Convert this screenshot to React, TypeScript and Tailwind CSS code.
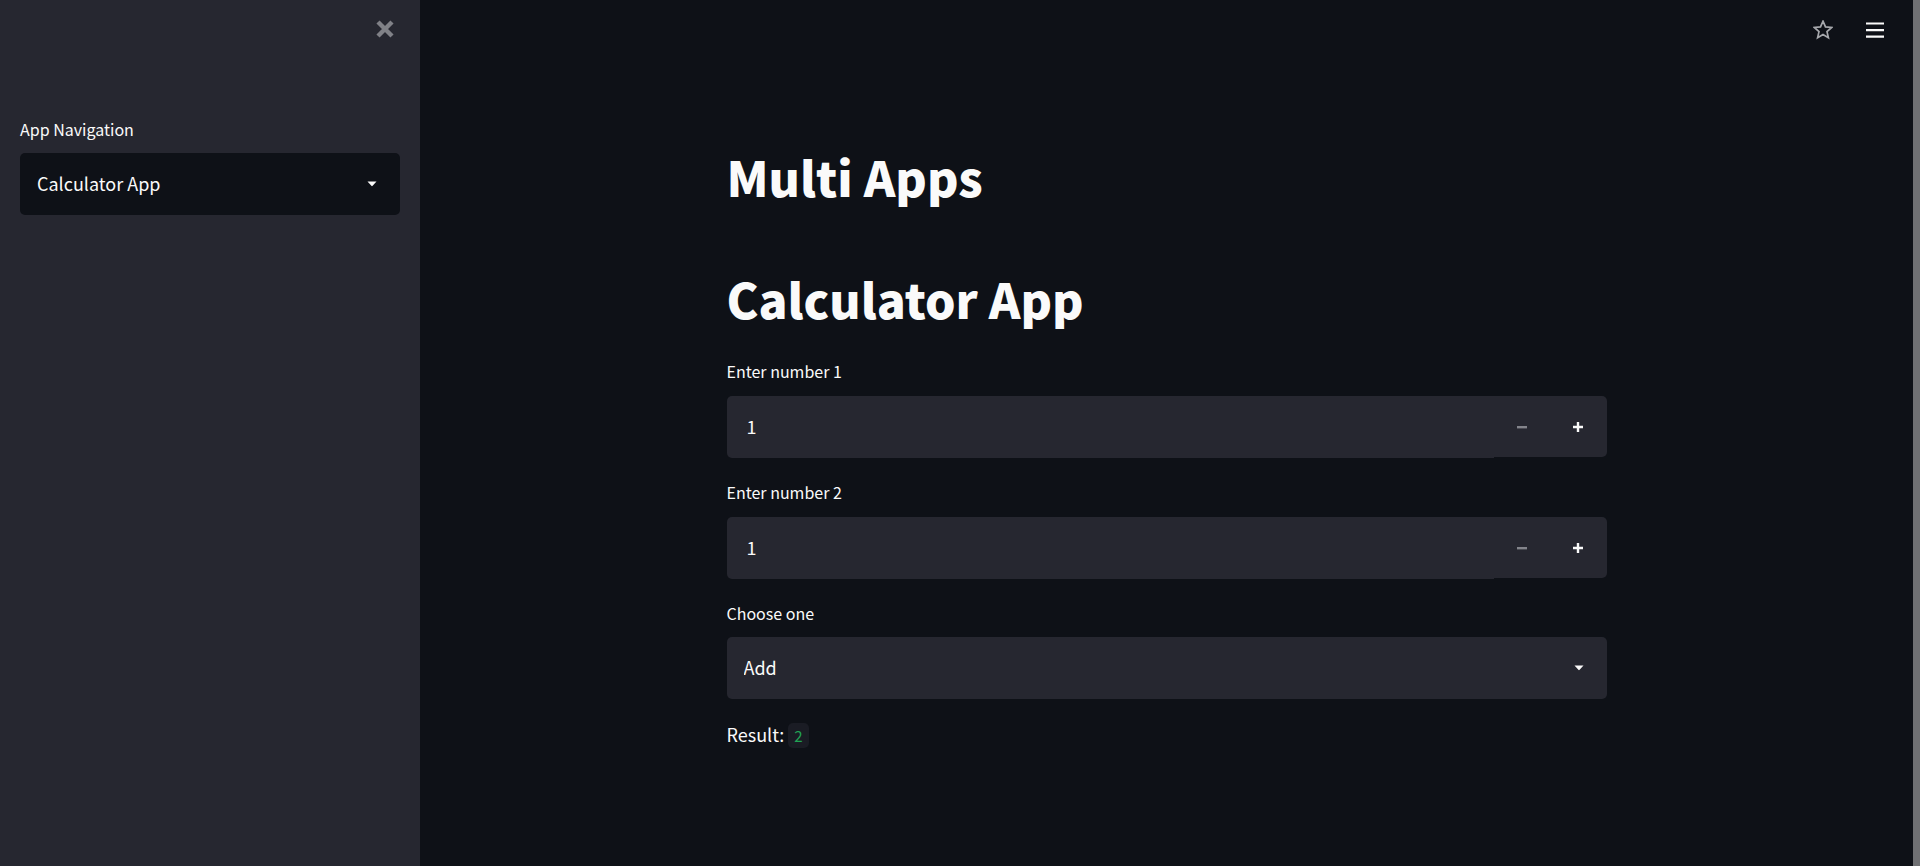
import { useId, useState } from "react";

function Caret() {
  return (
    <svg
      aria-hidden="true"
      viewBox="0 0 10 6"
      className="pointer-events-none absolute right-[23px] top-7 h-[6px] w-[10px]"
    >
      <path d="M0.5 0.5h9L5.6 4.8a0.8 0.8 0 0 1-1.2 0z" fill="#fafafa" />
    </svg>
  );
}

type SelectFieldProps = {
  label: string;
  options: string[];
  value: string;
  onChange: (value: string) => void;
  tone: "dark" | "light";
};

function SelectField({ label, options, value, onChange, tone }: SelectFieldProps) {
  const id = useId();
  const background = tone === "dark" ? "bg-[#0e1117]" : "bg-[#262730]";
  return (
    <div>
      <label htmlFor={id} className="mb-[10px] block text-base leading-7">
        {label}
      </label>
      <div className="relative">
        <select
          id={id}
          value={value}
          onChange={(event) => onChange(event.target.value)}
          className={`block h-[62px] w-full appearance-none rounded-[5px] pb-[2px] pl-[17px] pr-12 text-lg outline-none ${background}`}
        >
          {options.map((option) => (
            <option key={option}>{option}</option>
          ))}
        </select>
        <Caret />
      </div>
    </div>
  );
}

type NumberFieldProps = {
  label: string;
  value: number;
  onChange: (value: number) => void;
};

function NumberField({ label, value, onChange }: NumberFieldProps) {
  const id = useId();
  return (
    <div>
      <label htmlFor={id} className="mb-[11px] block text-base leading-7">
        {label}
      </label>
      <div className="flex items-start">
        <input
          id={id}
          type="text"
          inputMode="numeric"
          value={value}
          onChange={(event) => onChange(Number(event.target.value) || 0)}
          className="h-[62px] min-w-0 flex-1 rounded-l-[5px] bg-[#262730] px-5 pb-[2px] text-lg outline-none"
        />
        <div className="flex h-[61px] rounded-r-[5px] bg-[#262730] pr-px">
          <button
            type="button"
            aria-label={`Decrease ${label}`}
            disabled={value <= 1}
            onClick={() => onChange(value - 1)}
            className="flex w-14 items-center justify-center disabled:text-[#83848b]"
          >
            <svg aria-hidden="true" viewBox="0 0 10 10" className="size-[10px]">
              <path d="M0 4h10v2.4H0z" fill="currentColor" />
            </svg>
          </button>
          <button
            type="button"
            aria-label={`Increase ${label}`}
            onClick={() => onChange(value + 1)}
            className="flex w-14 items-center justify-center"
          >
            <svg aria-hidden="true" viewBox="0 0 10 10" className="size-[10px]">
              <path d="M0 3.8h3.8V0h2.4v3.8H10v2.4H6.2V10H3.8V6.2H0z" fill="currentColor" />
            </svg>
          </button>
        </div>
      </div>
    </div>
  );
}

export default function App() {
  const [page, setPage] = useState("Calculator App");
  const [first, setFirst] = useState(1);
  const [second, setSecond] = useState(1);
  const [operation, setOperation] = useState("Add");

  const results: Record<string, number> = {
    Add: first + second,
    Subtract: first - second,
    Multiply: first * second,
    Divide: first / second,
  };

  return (
    <div className="flex min-h-screen bg-[#0e1117] font-['Noto_Sans_CJK_SC','Noto_Sans',sans-serif] text-[#fafafa]">
      <aside className="w-[420px] shrink-0 bg-[#262730] px-5">
        <div className="flex h-[115px] justify-end pr-[5px] pt-[19px]">
          <button type="button" aria-label="Close sidebar" className="size-5 text-[#808187]">
            <svg aria-hidden="true" viewBox="0 0 20 20" className="size-5">
              <path d="M3 3l14 14M17 3L3 17" stroke="currentColor" strokeWidth="4.4" />
            </svg>
          </button>
        </div>
        <SelectField
          label="App Navigation"
          options={["Calculator App", "Other App"]}
          value={page}
          onChange={setPage}
          tone="dark"
        />
      </aside>

      <div className="min-w-0 flex-1">
        <header className="flex h-[60px] items-center justify-end gap-8 pr-7">
          <button type="button" aria-label="Favorite" className="text-[#a6a8ac]">
            <svg aria-hidden="true" viewBox="0 0 20 20" className="size-5">
              <path
                d="M10 1.200l2.500 5.700 6.200.6-4.700 4.100 1.400 6.200-5.400-3.300-5.400 3.300 1.400-6.200L1.300 7.500l6.200-.6z"
                fill="none"
                stroke="currentColor"
                strokeWidth="1.7"
              />
            </svg>
          </button>
          <button type="button" aria-label="Main menu">
            <svg aria-hidden="true" viewBox="0 0 20 20" className="size-5">
              <path d="M1 2.400h18v2.200H1zM1 9h18v2.200H1zM1 15.600h18v2.200H1z" fill="currentColor" />
            </svg>
          </button>
        </header>

        <main className="mx-auto w-full max-w-[880px] pt-[83px]">
          <h1 className="text-[48px] font-black leading-[66px]">Multi Apps</h1>
          <h1 className="mt-14 text-[48px] font-black leading-[66px]">{page}</h1>
          <div className="mt-[26px] flex flex-col gap-5">
            <NumberField label="Enter number 1" value={first} onChange={setFirst} />
            <NumberField label="Enter number 2" value={second} onChange={setSecond} />
            <SelectField
              label="Choose one"
              options={Object.keys(results)}
              value={operation}
              onChange={setOperation}
              tone="light"
            />
            <p className="text-lg leading-[30px]">
              Result:{" "}
              <code className="rounded-[5px] bg-[#1a1c24] px-[6px] py-[2px] font-['Noto_Sans_CJK_SC',sans-serif] text-[15px] text-[#21a354]">
                {results[operation]}
              </code>
            </p>
          </div>
        </main>
      </div>

      <div aria-hidden="true" className="w-[7px] shrink-0 bg-[#6f7073]" />
    </div>
  );
}
